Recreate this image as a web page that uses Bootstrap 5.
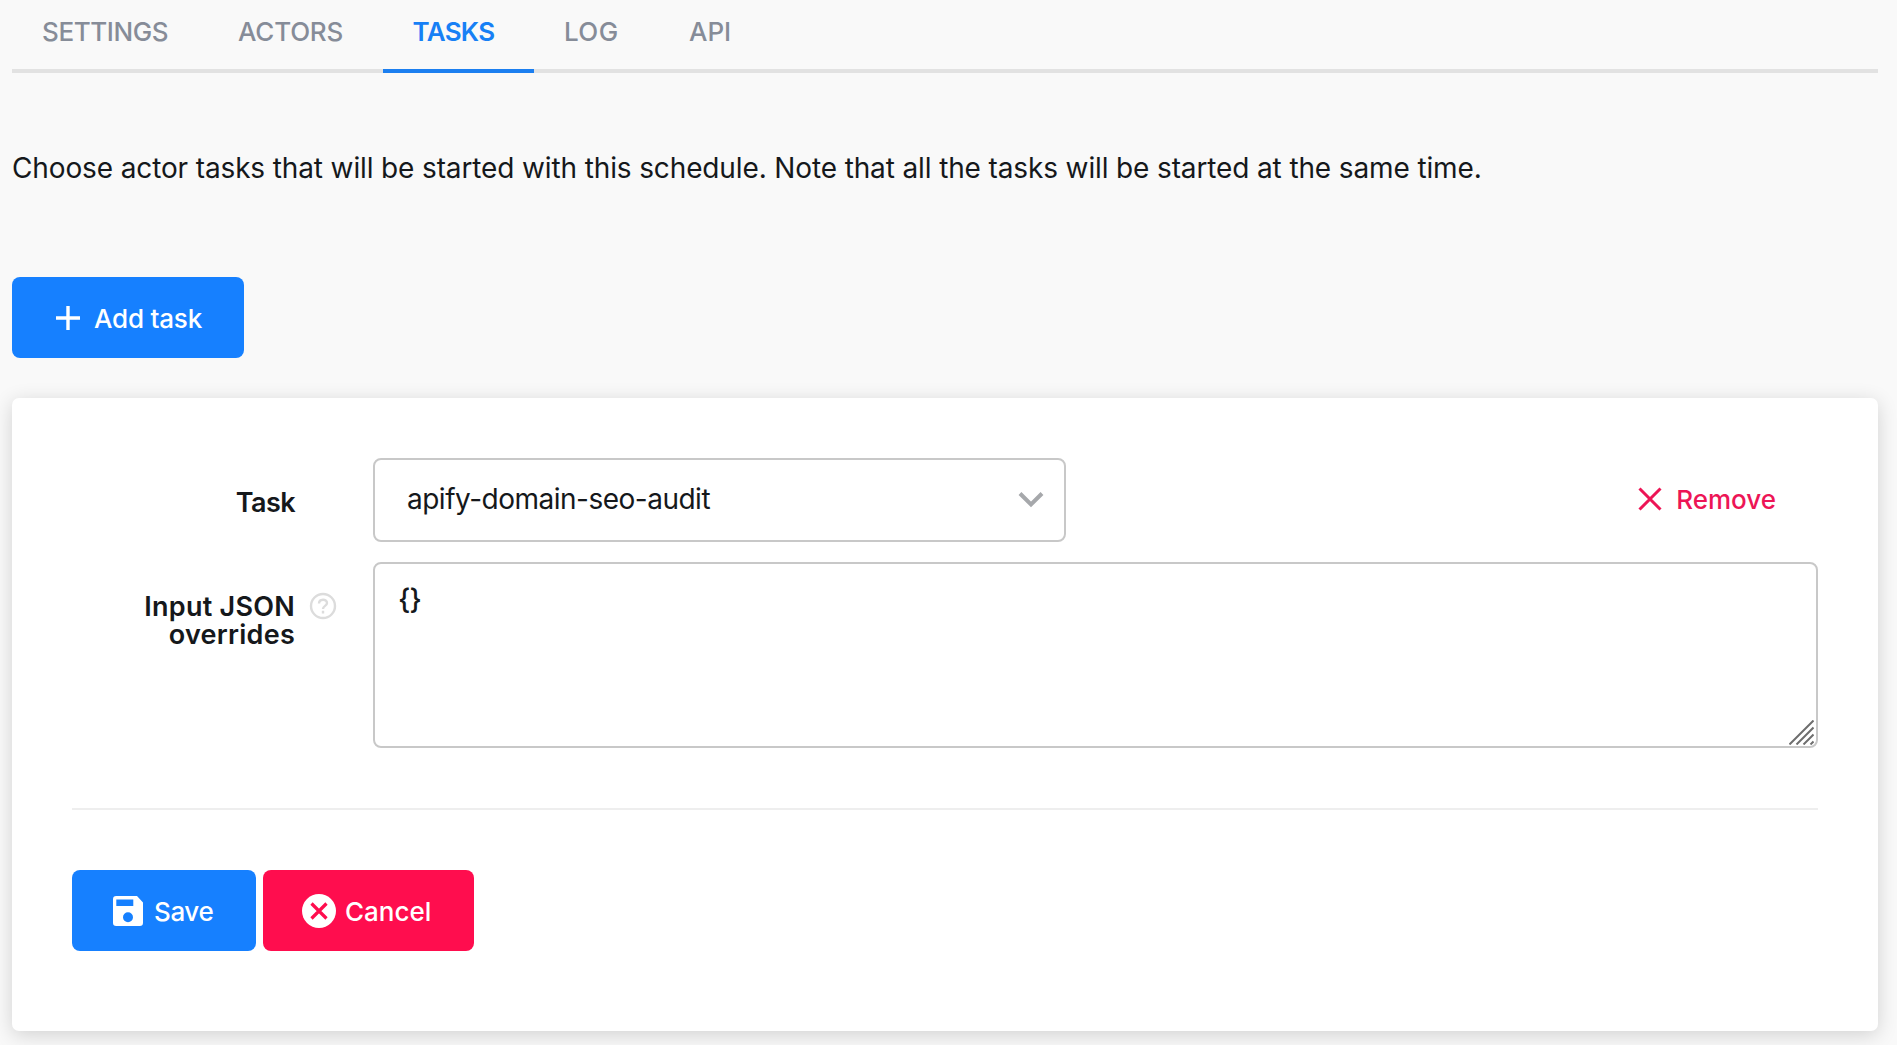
<!DOCTYPE html>
<html lang="en">
<head>
<meta charset="utf-8">
<meta name="viewport" content="width=device-width, initial-scale=1">
<title>Schedule tasks</title>
<link href="https://cdn.jsdelivr.net/npm/bootstrap@5.3.0/dist/css/bootstrap.min.css" rel="stylesheet">
<style>
  html { background: #f9f9f9; }
  body { font-family: Inter, "Liberation Sans", sans-serif; background: #f9f9f9; color: #15181b; }
  svg { display: block; flex: none; }
  .page-wrap { min-height: 1045px; padding: 0 19px 0 12px; }

  .schedule-tabs { border-bottom: 0; box-shadow: inset 0 -4px 0 #e2e2e2; }
  .schedule-tabs .nav-link { font-size: 26px; line-height: 35px; font-weight: 500; color: #868c98;
    padding: 14px 0 20px 30px; margin: 0; border: 0; border-bottom: 4px solid transparent; border-radius: 0; white-space: nowrap; }
  .schedule-tabs .nav-link.active { color: #1780f5; background: none; border-bottom-color: #1c7ff0; }
  .schedule-tabs .tab-settings { width: 196px; letter-spacing: -.4px; }
  .schedule-tabs .tab-actors { width: 175px; letter-spacing: -.2px; }
  .schedule-tabs .tab-tasks { width: 151px; letter-spacing: -.7px; padding-left: 29.500px; font-weight: 600; }
  .schedule-tabs .tab-log { width: 125px; letter-spacing: .4px; }

  .intro-text { font-size: 28px; line-height: 42px; letter-spacing: -.128px; margin: 74px 0 88px; }

  .btn-action { display: inline-flex; align-items: center; height: 81px; border: 0; border-radius: 8px; padding: 0;
    font-size: 26px; line-height: 34px; font-weight: 500; color: #fff; white-space: nowrap; }
  .btn-action span { padding-top: 2px; }
  .btn-blue { background: #1680ff; }
  .btn-red { background: #ff0d4e; }
  .btn-add { width: 232px; padding-left: 44px; gap: 14px; letter-spacing: -.2px; }
  .btn-save { width: 184px; padding-left: 41px; gap: 11px; letter-spacing: -.4px; }
  .btn-cancel { width: 211px; padding-left: 39px; gap: 9px; }

  .task-card { margin-top: 40px; height: 633px; padding: 60px 60px 80px; border: 0; border-radius: 7px; background: #fff;
    box-shadow: 0 4px 20px rgba(0,0,0,.16); }
  .field-label { width: 223px; padding-top: 31px; font-size: 27px; line-height: 28px; font-weight: 600; text-align: right; letter-spacing: .25px; }
  .label-task { letter-spacing: -.6px; }
  .help-slot { width: 78px; padding: 30px 0 0 14px; }
  .task-row { height: 84px; margin-bottom: 20px; }
  .task-select { width: 693px; border: 2px solid #c8c8c8; border-radius: 8px; padding: 0 20px 2px 32px; font-size: 28px; letter-spacing: -.5px; }
  .btn-remove { gap: 14px; padding: 0 42px 0 0; border: 0; font-size: 26px; font-weight: 500; line-height: 34px; color: #ed1556; }
  .btn-remove svg { margin-bottom: 3px; }
  .json-row { height: 186px; }
  .json-input { border: 2px solid #c8c8c8; border-radius: 8px; padding: 14px 2px 1px 23px; font-size: 28px; line-height: 42px; letter-spacing: -.8px; }
  .json-text { font-weight: 500; }
  .rule-line { height: 2px; background: #eee; margin: 60px 0; }
  .form-actions { gap: 7px; }
</style>
</head>
<body>
<main class="page-wrap">
  <ul class="nav nav-tabs schedule-tabs">
    <li class="nav-item"><a class="nav-link tab-settings">SETTINGS</a></li>
    <li class="nav-item"><a class="nav-link tab-actors">ACTORS</a></li>
    <li class="nav-item"><a class="nav-link tab-tasks active">TASKS</a></li>
    <li class="nav-item"><a class="nav-link tab-log">LOG</a></li>
    <li class="nav-item"><a class="nav-link">API</a></li>
  </ul>

  <p class="intro-text">Choose actor tasks that will be started with this schedule. Note that all the tasks will be started at the same time.</p>

  <button type="button" class="btn btn-action btn-blue btn-add d-flex">
    <svg width="24" height="24" viewBox="0 0 24 24" fill="none" stroke="#fff" stroke-width="3.4"><path d="M12 0v24M0 12h24"/></svg>
    <span>Add task</span>
  </button>

  <section class="card task-card">
    <div class="d-flex task-row">
      <div class="field-label label-task">Task</div>
      <div class="help-slot"></div>
      <div class="task-select d-flex align-items-center justify-content-between">
        <span>apify-domain-seo-audit</span>
        <svg width="26" height="18" viewBox="0 0 26 18" fill="none" stroke="#a6a8ab" stroke-width="4"><path d="M2 3.500l11 11 11-11"/></svg>
      </div>
      <button type="button" class="btn btn-remove d-flex align-items-center ms-auto">
        <svg width="24" height="24" viewBox="0 0 24 24" fill="none" stroke="currentColor" stroke-width="3"><path d="M1.500 1.500l21 21M22.500 1.500l-21 21"/></svg>
        <span>Remove</span>
      </button>
    </div>
    <div class="d-flex json-row">
      <div class="field-label">Input JSON overrides</div>
      <div class="help-slot">
        <svg width="28" height="28" viewBox="0 0 28 28" fill="none" stroke="#dcdcdc" stroke-width="2.4"><circle cx="14" cy="14" r="12"/><path d="M10 11.500c0-5 8-5 8-.5 0 3-4 2.800-4 6M14 18.800v2.600"/></svg>
      </div>
      <div class="json-input flex-grow-1 d-flex justify-content-between">
        <span class="json-text">{}</span>
        <svg class="align-self-end" width="25" height="25" viewBox="0 0 25 25" fill="none" stroke="#6e6e6e" stroke-width="2"><path d="M.5 24.500l24-24M7.500 24.500l17-17M14.500 24.500l10-10M21.500 24.500l3-3"/></svg>
      </div>
    </div>
    <div class="rule-line"></div>
    <div class="d-flex form-actions">
      <button type="button" class="btn btn-action btn-blue btn-save">
        <svg width="30" height="30" viewBox="0 0 30 30"><path fill="#fff" fill-rule="evenodd" d="M3.200 0H24l6 6.500v20.300a3.200 3.200 0 0 1-3.200 3.200H3.200A3.200 3.200 0 0 1 0 26.800V3.200A3.200 3.200 0 0 1 3.200 0zM3.300 3.400v6.600h17V3.400zM15 16.300a5 5 0 1 0 0 10 5 5 0 0 0 0-10z"/></svg>
        <span>Save</span>
      </button>
      <button type="button" class="btn btn-action btn-red btn-cancel">
        <svg width="34" height="34" viewBox="0 0 34 34"><circle cx="17" cy="17" r="17" fill="#fff"/><path d="M9.500 9.500l15 15M24.500 9.500l-15 15" stroke="#ff0d4e" stroke-width="3.200"/></svg>
        <span>Cancel</span>
      </button>
    </div>
  </section>
</main>
<script src="https://cdn.jsdelivr.net/npm/bootstrap@5.3.0/dist/js/bootstrap.bundle.min.js"></script>
</body>
</html>
